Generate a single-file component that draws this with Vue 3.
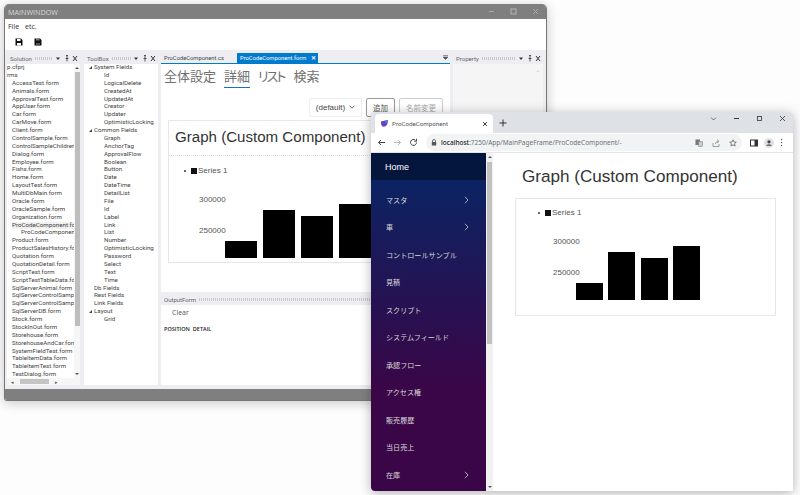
<script setup>
const solutionRows = [
  'p.cfprj', 'rms', 'AccessTest.form', 'Animals.form', 'ApprovalTest.form', 'AppUser.form', 'Car.form',
  'CarMove.form', 'Client.form', 'ControlSample.form', 'ControlSampleChildren.', 'Dialog.form', 'Employee.form',
  'Fishs.form', 'Home.form', 'LayoutTest.form', 'MultiDbMain.form', 'Oracle.form', 'OracleSample.form',
  'Organization.form', 'ProCodeComponent.for', 'ProCodeComponent', 'Product.form', 'ProductSalesHistory.for',
  'Quotation.form', 'QuotationDetail.form', 'ScriptTest.form', 'ScriptTestTableData.form', 'SqlServerAnimal.form',
  'SqlServerControlSample', 'SqlServerControlSample', 'SqlServerDB.form', 'Stock.form', 'StockInOut.form',
  'Storehouse.form', 'StorehouseAndCar.form', 'SystemFieldTest.form', 'TableItemData.form', 'TableItemTest.form',
  'TestDialog.form',
]

const toolboxRows = [
  { text: 'System Fields', level: 'group', open: true },
  ...['Id', 'LogicalDelete', 'CreatedAt', 'UpdatedAt', 'Creator', 'Updater', 'OptimisticLocking'].map((text) => ({ text, level: 'child' })),
  { text: 'Common Fields', level: 'group', open: true },
  ...['Graph', 'AnchorTag', 'ApprovalFlow', 'Boolean', 'Button', 'Date', 'DateTime', 'DetailList', 'File', 'Id', 'Label',
    'Link', 'List', 'Number', 'OptimisticLocking', 'Password', 'Select', 'Text', 'Time'].map((text) => ({ text, level: 'child' })),
  { text: 'Db Fields', level: 'group' },
  { text: 'Rest Fields', level: 'group' },
  { text: 'Link Fields', level: 'group' },
  { text: 'Layout', level: 'group', open: true },
  { text: 'Grid', level: 'child' },
]

const bars = [17, 48, 42, 54]

const navItems = [
  { text: 'マスタ', more: true },
  { text: '車', more: true },
  { text: 'コントロールサンプル' },
  { text: '見積' },
  { text: 'スクリプト' },
  { text: 'システムフィールド' },
  { text: '承認フロー' },
  { text: 'アクセス権' },
  { text: '販売履歴' },
  { text: '当日売上' },
  { text: '在庫', more: true },
]
</script>

<template>
  <div class="desktop">
    <!-- desktop app -->
    <section class="win">
      <header class="win-title">
        <span>MAINWINDOW</span>
        <div class="win-ctrls">
          <svg width="7" height="7" viewBox="0 0 7 7"><path d="M1 3.500h5" stroke="#a9a9a9" /></svg>
          <svg width="7" height="7" viewBox="0 0 7 7"><rect x="1" y="1" width="5" height="5" fill="none" stroke="#b5b5b5" /></svg>
          <svg width="7" height="7" viewBox="0 0 7 7"><path d="M1 1l5 5M6 1L1 6" stroke="#a9a9a9" /></svg>
        </div>
      </header>
      <div class="win-menu"><span>File</span><span>etc.</span></div>
      <div class="win-tools">
        <svg width="8" height="8" viewBox="0 0 8 8"><path d="M0.500 0.500h5.500l1.500 1.500v5.500h-7z" fill="#111" /><rect x="2" y="1" width="3.500" height="2" fill="#fff" /><rect x="2" y="5" width="4" height="2.500" fill="#fff" /></svg>
        <svg width="8" height="8" viewBox="0 0 8 8"><path d="M0.500 0.500h5.500l1.500 1.500v5.500h-7z" fill="#111" /><rect x="2" y="1" width="3.500" height="1.500" fill="#777" /><rect x="2" y="5" width="4" height="2.500" fill="#555" /></svg>
      </div>

      <div class="dock">
        <div class="panel panel--solution">
          <div class="panel-head">
            <span>Solution</span><i class="grip" />
            <svg class="head-icons" width="22" height="7" viewBox="0 0 22 7"><path d="M0 2.500h4L2 5z" fill="#333" /><path d="M11 .5v3M9.500 3.500h3M11 3.500V6.500M10 .5h2" stroke="#333" fill="none" stroke-width=".8" /><path d="M17 1l4 5M21 1l-4 5" stroke="#333" /></svg>
          </div>
          <div class="panel-body solution-body">
            <ul class="tree solution-tree">
              <li v-for="(row, i) in solutionRows" :key="i" :class="{ 'tree-top': i < 2, 'tree-sel': i === 20, 'tree-sub': i === 21 }">{{ row }}</li>
            </ul>
            <div class="vbar"><span class="arrow arrow--up" /><i /><span class="arrow arrow--down" /></div>
            <div class="hbar"><span>◂</span><i /><span>▸</span></div>
          </div>
        </div>

        <div class="panel panel--toolbox">
          <div class="panel-head">
            <span>ToolBox</span><i class="grip" />
            <svg class="head-icons" width="22" height="7" viewBox="0 0 22 7"><path d="M0 2.500h4L2 5z" fill="#333" /><path d="M11 .5v3M9.500 3.500h3M11 3.500V6.500M10 .5h2" stroke="#333" fill="none" stroke-width=".8" /><path d="M17 1l4 5M21 1l-4 5" stroke="#333" /></svg>
          </div>
          <div class="panel-body">
            <ul class="tree">
              <li v-for="(row, i) in toolboxRows" :key="i" :class="row.level">
                <b v-if="row.open" class="caret" />{{ row.text }}
              </li>
            </ul>
          </div>
        </div>

        <div class="center">
          <div class="doc-tabs">
            <span class="doc-tab">ProCodeComponent.cs</span>
            <span class="doc-tab doc-tab--active">ProCodeComponent.form <em>✕</em></span>
            <svg class="doc-menu" width="5" height="5" viewBox="0 0 5 5"><path d="M0 .5h5M0 2h5L2.500 4.500z" stroke="#555" stroke-width=".6" fill="#555" /></svg>
          </div>
          <div class="doc">
            <nav class="doc-nav">
              <span>全体設定</span>
              <span class="doc-nav-on">詳細</span>
              <span class="doc-nav-kana">リスト</span>
              <span>検索</span>
            </nav>
            <div class="doc-actions">
              <span class="select">(default)<svg width="6" height="4" viewBox="0 0 6 4"><path d="M.5 .8L3 3.200 5.500 .8" fill="none" stroke="#444" stroke-width=".8" /></svg></span>
              <span class="btn">追加</span>
              <span class="btn btn--off">名前変更</span>
            </div>
            <div class="card card--app">
              <h2 class="card-title">Graph (Custom Component)</h2>
              <div class="chart">
                <div class="legend"><i class="dot" /><i class="swatch" /><span>Series 1</span></div>
                <div class="plot">
                  <div class="axis"><span>300000</span><span>250000</span></div>
                  <div class="bars">
                    <i v-for="(h, i) in bars" :key="i" :style="{ height: h + 'px' }" />
                  </div>
                </div>
              </div>
            </div>
          </div>
          <div class="output-head"><span>OutputForm</span><i class="grip" /></div>
          <div class="output">
            <div class="output-clear">Clear</div>
            <div class="output-cols"><span>POSITION</span><span>DETAIL</span></div>
          </div>
        </div>

        <div class="panel panel--property">
          <div class="panel-head">
            <span>Property</span><i class="grip" />
            <svg class="head-icons" width="22" height="7" viewBox="0 0 22 7"><path d="M0 2.500h4L2 5z" fill="#333" /><path d="M11 .5v3M9.500 3.500h3M11 3.500V6.500M10 .5h2" stroke="#333" fill="none" stroke-width=".8" /><path d="M17 1l4 5M21 1l-4 5" stroke="#333" /></svg>
          </div>
          <div class="panel-body panel-body--grey"><span class="arrow arrow--up arrow--faint" /></div>
        </div>
      </div>
      <footer class="win-status" />
    </section>

    <!-- browser -->
    <section class="browser">
      <div class="tabstrip">
        <div class="tab">
          <svg width="7" height="7" viewBox="0 0 7 7"><path d="M0 1.500L4 .5 7 0 6.500 3.500C6 6 3.500 7 1.500 6.500 0 5.500 0 3.500 0 1.500z" fill="#6b3fc9" /><circle cx="5.500" cy="1.500" r="1.300" fill="#3f8fd6" /></svg>
          <span class="tab-text">ProCodeComponent</span>
          <svg class="tab-x" width="6" height="6" viewBox="0 0 6 6"><path d="M1 1l4 4M5 1L1 5" stroke="#444" /></svg>
        </div>
        <svg class="tab-plus" width="8" height="8" viewBox="0 0 8 8"><path d="M4 .5v7M.5 4h7" stroke="#333" /></svg>
        <div class="chrome-ctrls">
          <svg width="7" height="7" viewBox="0 0 7 7"><path d="M1 2.500L3.500 5 6 2.500" fill="none" stroke="#555" stroke-width=".8" /></svg>
          <svg width="7" height="7" viewBox="0 0 7 7"><path d="M1 3.500h5" stroke="#333" /></svg>
          <svg width="7" height="7" viewBox="0 0 7 7"><rect x="1.500" y="1.500" width="4" height="4" fill="none" stroke="#333" stroke-width=".8" /></svg>
          <svg width="7" height="7" viewBox="0 0 7 7"><path d="M1 1l5 5M6 1L1 6" stroke="#333" stroke-width=".8" /></svg>
        </div>
      </div>
      <div class="addressbar">
        <svg width="9" height="9" viewBox="0 0 9 9"><path d="M8 4.500H1.500M4 2L1.500 4.500 4 7" fill="none" stroke="#444" /></svg>
        <svg width="9" height="9" viewBox="0 0 9 9"><path d="M1 4.500h6.500M5 2l2.500 2.500L5 7" fill="none" stroke="#b4b6b9" /></svg>
        <svg width="9" height="9" viewBox="0 0 9 9"><path d="M7.500 4.500A3 3 0 1 1 6.500 2.200M7.500 .8v2.400H5.100" fill="none" stroke="#444" /></svg>
        <div class="omnibox">
          <svg width="6" height="7" viewBox="0 0 6 7"><path d="M1.500 3V2a1.500 1.500 0 0 1 3 0v1" fill="none" stroke="#555" stroke-width=".8" /><rect x=".8" y="3" width="4.400" height="3.500" fill="#555" /></svg>
          <span class="url"><b>localhost</b>:7250/App/MainPageFrame/ProCodeComponent/-</span>
          <div class="omni-icons">
            <svg width="8" height="8" viewBox="0 0 8 8"><rect x=".5" y=".5" width="4.500" height="5.500" fill="#777" /><rect x="3.500" y="2.500" width="4" height="5" fill="#c9cbce" stroke="#777" stroke-width=".5" /></svg>
            <svg width="8" height="8" viewBox="0 0 8 8"><path d="M1 4v3.500h6V5M3.500 5C3.800 3 5 2.300 6 2.300M5 .7l2 1.600L5 3.900" fill="none" stroke="#777" stroke-width=".7" /></svg>
            <svg width="8" height="8" viewBox="0 0 8 8"><path d="M4 .8l1 2.200 2.300.2-1.800 1.500.6 2.300L4 5.800 1.900 7l.6-2.300L.7 3.200 3 3z" fill="none" stroke="#555" stroke-width=".7" /></svg>
          </div>
        </div>
        <div class="chrome-icons">
          <svg width="8" height="8" viewBox="0 0 8 8"><rect x=".5" y="1" width="7" height="6" fill="none" stroke="#333" /><rect x="4.500" y="1" width="3" height="6" fill="#333" /></svg>
          <svg width="10" height="10" viewBox="0 0 10 10"><circle cx="5" cy="5" r="5" fill="#dfe1e5" /><circle cx="5" cy="3.800" r="1.600" fill="#444" /><path d="M2.200 7.800C2.800 6 7.200 6 7.800 7.800z" fill="#444" /></svg>
          <svg width="3" height="9" viewBox="0 0 3 9"><circle cx="1.500" cy="1.500" r=".7" fill="#555" /><circle cx="1.500" cy="4.500" r=".7" fill="#555" /><circle cx="1.500" cy="7.500" r=".7" fill="#555" /></svg>
        </div>
      </div>

      <div class="page">
        <aside class="sidebar">
          <div class="side-home">Home</div>
          <ul class="side-nav">
            <li v-for="item in navItems" :key="item.text">
              <span>{{ item.text }}</span>
              <svg v-if="item.more" width="5" height="8" viewBox="0 0 5 8"><path d="M1 .8L4 4 1 7.200" fill="none" stroke="#c9c9d6" stroke-width=".8" /></svg>
            </li>
          </ul>
        </aside>
        <div class="side-scroll"><span class="arrow arrow--up" /><i /><span class="arrow arrow--down" /></div>
        <main class="content">
          <h1 class="content-title">Graph (Custom Component)</h1>
          <div class="card card--web">
            <div class="chart">
              <div class="legend"><i class="dot" /><i class="swatch" /><span>Series 1</span></div>
              <div class="plot">
                <div class="axis"><span>300000</span><span>250000</span></div>
                <div class="bars">
                  <i v-for="(h, i) in bars" :key="i" :style="{ height: h + 'px' }" />
                </div>
              </div>
            </div>
          </div>
        </main>
      </div>
    </section>
  </div>
</template>

<style>
html, body { margin: 0; background: #fff; }
</style>

<style scoped>
* { box-sizing: border-box; }
ul { list-style: none; margin: 0; padding: 0; }

.desktop {
  position: relative;
  width: 800px;
  height: 495px;
  overflow: hidden;
  background: #fdfdfd;
  font-family: "Open Sans", "Noto Sans CJK JP", sans-serif;
}

/* desktop app window */
.win {
  position: absolute;
  left: 4px;
  top: 4px;
  width: 543px;
  height: 397px;
  display: flex;
  flex-direction: column;
  border-radius: 5px 5px 3px 3px;
  border: 1px solid #777;
  border-top: 0;
  background: #fff;
  box-shadow: 0 2px 12px rgba(0, 0, 0, .22);
  overflow: hidden;
}
.win-title {
  height: 15px;
  flex: none;
  display: flex;
  align-items: center;
  justify-content: space-between;
  padding: 0 7px 0 3px;
  background: #7f7f7f;
  color: #d8d8d8;
  font-size: 7.200px;
}
.win-ctrls { display: flex; gap: 15px; }
.win-menu {
  height: 15px;
  flex: none;
  display: flex;
  align-items: center;
  gap: 6px;
  padding-left: 3px;
  font-size: 7px;
  color: #333;
}
.win-tools {
  height: 16px;
  flex: none;
  display: flex;
  align-items: center;
  gap: 11px;
  padding-left: 10px;
}
.dock {
  flex: 1;
  min-height: 0;
  display: flex;
  background: #eeeef2;
  padding: 3px 3px 4px 2px;
}
.win-status { height: 11px; flex: none; background: #7f7f7f; }

.panel { display: flex; flex-direction: column; flex: none; }
.panel--solution { width: 73px; margin-right: 4px; }
.panel--toolbox { width: 74px; margin-right: 3px; }
.panel--property { width: 90px; margin-left: 3px; }
.panel-head {
  height: 11px;
  flex: none;
  display: flex;
  align-items: center;
  padding: 0 2px 0 3px;
  font-family: Roboto, sans-serif;
  font-size: 6px;
  color: #666;
  gap: 3px;
}
.grip {
  flex: 1;
  height: 3px;
  background: repeating-linear-gradient(90deg, #c9c9d0 0 1px, transparent 1px 2px);
}
.head-icons { flex: none; }
.panel-body { flex: 1; position: relative; background: #fff; overflow: hidden; }
.panel-body--grey { background: #f5f5f5; }
.panel-body--grey .arrow { position: absolute; top: 3px; right: 3px; }

.tree {
  font-family: Roboto, sans-serif;
  font-size: 6.200px;
  line-height: 7.870px;
  color: #444;
  white-space: nowrap;
}
.tree .group { padding-left: 10px; position: relative; }
.tree .child { padding-left: 20px; }
.caret {
  position: absolute;
  left: 5px;
  top: 2px;
  width: 0;
  height: 0;
  border-left: 3px solid transparent;
  border-bottom: 3px solid #444;
}
.solution-tree { width: 67px; overflow: hidden; padding-left: 5px; }
.solution-tree .tree-top { margin-left: -5px; }
.solution-tree .tree-sel { background: #f0f0f0; }
.solution-tree .tree-sub { padding-left: 9px; }
.vbar {
  position: absolute;
  top: 0;
  right: 0;
  bottom: 7px;
  width: 6px;
  display: flex;
  flex-direction: column;
  align-items: center;
  background: #f6f6f6;
}
.vbar i { display: block; width: 5px; height: 254px; background: #bdbdbd; margin-top: 3px; }
.vbar .arrow--up { margin-top: 3px; }
.hbar {
  position: absolute;
  left: 0;
  right: 0;
  bottom: 0;
  height: 7px;
  display: flex;
  align-items: center;
  justify-content: space-between;
  padding: 0 22px 0 4px;
  background: #f6f6f6;
  font-size: 5px;
  color: #555;
}
.hbar i { width: 29px; height: 5px; background: #c4c4c4; }

/* document area */
.center { flex: 1; min-width: 0; display: flex; flex-direction: column; }
.doc-tabs {
  height: 10px;
  flex: none;
  display: flex;
  align-items: center;
  font-family: Roboto, sans-serif;
  font-size: 5.800px;
  position: relative;
}
.doc-tab { padding: 0 3px; color: #444; white-space: nowrap; width: 76px; }
.doc-tab--active {
  background: #007acc;
  color: #fff;
  height: 10px;
  line-height: 10px;
  width: 81px;
}
.doc-tab--active em { font-style: normal; font-weight: 700; margin-left: 3px; font-size: 6px; }
.doc-menu { position: absolute; right: 2px; top: 2px; }
.doc {
  flex: 1;
  min-height: 0;
  background: #fff;
  border-top: 1px solid #007acc;
  display: flex;
  flex-direction: column;
  overflow: hidden;
}
.doc-nav {
  display: flex;
  gap: 8px;
  padding: 4px 0 0 3px;
  font-size: 13px;
  line-height: 16px;
  height: 24px;
  color: #707070;
  font-feature-settings: "palt";
}
.doc-nav-on { border-bottom: 1px solid #1b6ec2; height: 20px; }
.doc-nav-kana { letter-spacing: -2px; margin-right: 1px; }
.doc-actions {
  display: flex;
  justify-content: flex-end;
  align-items: center;
  gap: 4px;
  margin-top: 9px;
  padding-right: 7px;
  height: 20px;
  font-size: 8px;
}
.select {
  width: 53px;
  height: 19px;
  display: flex;
  align-items: center;
  justify-content: center;
  gap: 4px;
  border: 1px solid #eee;
  border-radius: 2px;
  font-family: "Liberation Sans", sans-serif;
  color: #444;
}
.btn {
  height: 19px;
  padding: 0 6px;
  display: flex;
  align-items: center;
  border: 1px solid #999;
  border-radius: 2px;
  color: #555;
  font-size: 7.500px;
}
.btn--off { border-color: #ccc; color: #aaa; }

.card { border: 1px solid #e7e7e7; font-family: "Liberation Sans", sans-serif; }
.card--app { margin: 3px 7px 0; height: 143px; flex: none; }
.card-title {
  margin: 0;
  height: 35px;
  padding: 0 0 0 6px;
  font-size: 15.100px;
  font-weight: 400;
  line-height: 32px;
  color: #333;
  border-bottom: 1px dotted #ddd;
}
.chart { font-size: 8px; color: #555; }
.card--app .chart { padding: 10px 0 0 15px; }
.card--web .chart { padding: 9px 0 0 22px; }
.legend { display: flex; align-items: center; height: 9px; line-height: 9px; }
.dot { width: 2px; height: 2px; border-radius: 50%; background: #333; margin-right: 5px; }
.swatch { width: 6px; height: 6px; background: #111; margin-right: 1px; }
.plot { display: flex; height: 63px; margin-top: 20px; }
.card--app .plot { margin-left: 15px; }
.card--web .plot { margin-left: 15px; }
.axis { display: flex; flex-direction: column; gap: 21px; line-height: 10px; }
.card--app .axis { width: 26px; }
.card--web .axis { width: 23px; }
.bars { flex: 1; display: flex; align-items: flex-end; }
.bars i { display: block; background: #000; flex: none; }
.card--app .bars { gap: 6px; }
.card--app .bars i { width: 32px; }
.card--web .bars { gap: 5.300px; }
.card--web .bars i { width: 27px; }

.output-head {
  height: 12px;
  flex: none;
  margin-top: 1px;
  display: flex;
  align-items: center;
  gap: 3px;
  font-family: Roboto, sans-serif;
  font-size: 6px;
  color: #666;
  padding-left: 3px;
}
.output { height: 80px; flex: none; background: #fff; font-size: 7px; color: #555; }
.output-clear { height: 16px; padding-left: 11px; line-height: 16px; }
.output-cols {
  display: flex;
  gap: 3px;
  padding: 4px 0 0 3px;
  font-size: 5.500px;
  font-weight: 600;
  color: #222;
}

/* browser window */
.browser {
  position: absolute;
  left: 371px;
  top: 112px;
  width: 422px;
  height: 379px;
  display: flex;
  flex-direction: column;
  border-radius: 4px 4px 0 0;
  background: #fff;
  box-shadow: 0 2px 12px rgba(0, 0, 0, .3);
  overflow: hidden;
}
.tabstrip {
  height: 21px;
  flex: none;
  display: flex;
  align-items: flex-end;
  background: #dee1e6;
  padding-left: 4px;
  position: relative;
}
.tab {
  width: 118px;
  height: 19px;
  display: flex;
  align-items: center;
  padding: 0 5px 0 6px;
  gap: 4px;
  background: #fff;
  border-radius: 4px 4px 0 0;
}
.tab-text { font-family: Roboto, sans-serif; font-size: 6.200px; color: #555; flex: 1; }
.tab-plus { margin: 0 0 6px 6px; }
.chrome-ctrls {
  position: absolute;
  right: 7px;
  top: 3px;
  display: flex;
  gap: 16px;
}
.addressbar {
  height: 20px;
  flex: none;
  display: flex;
  align-items: center;
  gap: 7px;
  padding: 0 6px;
  border-bottom: 1px solid #e6e6e6;
}
.omnibox {
  width: 316px;
  height: 17px;
  margin-left: 1px;
  display: flex;
  align-items: center;
  gap: 4px;
  padding: 0 5px 0 5px;
  background: #f1f3f4;
  border-radius: 9px;
}
.url { flex: 1; font-size: 6.500px; color: #6d7074; font-family: "Noto Sans", sans-serif; white-space: nowrap; }
.url b { font-weight: 500; color: #222; }
.omni-icons { display: flex; gap: 9px; }
.chrome-icons { display: flex; align-items: center; gap: 6px; margin-left: 1px; }

.page { flex: 1; min-height: 0; display: flex; }
.sidebar {
  width: 115px;
  flex: none;
  background: linear-gradient(180deg, #052767 0%, #3a0647 70%);
  border-bottom-left-radius: 4px;
  color: #d7d7d7;
}
.side-home {
  height: 27px;
  line-height: 28px;
  padding-left: 14px;
  background: rgba(0, 0, 0, .4);
  color: #fff;
  font-family: "Liberation Sans", sans-serif;
  font-size: 9px;
}
.side-nav { padding-top: 6px; font-size: 7.100px; }
.side-nav li {
  height: 27.500px;
  display: flex;
  align-items: center;
  justify-content: space-between;
  padding: 0 17px 0 15px;
}
.side-scroll {
  width: 7px;
  flex: none;
  display: flex;
  flex-direction: column;
  align-items: center;
  background: #f1f1f1;
}
.side-scroll i { width: 5px; height: 182px; background: #c1c1c1; margin-top: 4px; }
.arrow { width: 0; height: 0; border-left: 2px solid transparent; border-right: 2px solid transparent; }
.arrow--up { border-bottom: 2.500px solid #555; margin-top: 3px; }
.arrow--down { border-top: 2.500px solid #555; margin-top: auto; margin-bottom: 3px; }
.arrow--faint { border-bottom-color: #ddd; }
.content { flex: 1; min-width: 0; padding-left: 22px; }
.content-title {
  margin: 14px 0 0 7px;
  font-family: "Liberation Sans", sans-serif;
  font-size: 17.100px;
  line-height: 20px;
  font-weight: 400;
  color: #333;
}
.card--web { margin: 11px 17px 0 0; height: 118px; }
</style>
